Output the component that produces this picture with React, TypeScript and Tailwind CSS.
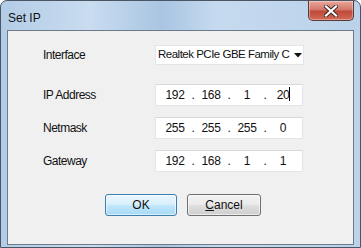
import React from 'react'

const body = { fontFamily: '"Liberation Sans", Arial, sans-serif' }

function IpBox({ parts, caret }: { parts: string[]; caret?: boolean }) {
  return (
    <div className="flex h-[22px] w-[148px] items-center border border-[#e2e5ea] border-t-[#d5d9de] bg-white pl-[3px] text-[12px] tracking-[-0.4px] text-[#111]">
      {parts.map((p, i) => (
        <React.Fragment key={i}>
          <div className="relative w-[32px] text-center">
            {p}
            {caret && i === 3 && <span className="absolute left-[22px] top-[1px] h-[14px] w-px bg-black" />}
          </div>
          {i < 3 && <div className="w-[4px] text-center">.</div>}
        </React.Fragment>
      ))}
    </div>
  )
}

function Row({ label, children, className = '' }: { label: string; children: React.ReactNode; className?: string }) {
  return (
    <div className={`flex items-center ${className}`}>
      <div className="w-[112px] text-[12px] tracking-[-0.5px] text-[#111]">{label}</div>
      {children}
    </div>
  )
}

export default function App() {
  return (
    <div
      className="relative h-[248px] w-[361px] overflow-hidden rounded-t-[7px] border border-[#4a5663] bg-[linear-gradient(90deg,#b3cce6_0%,#c9dcf0_25%,#a9c5e2_45%,#c6daef_60%,#bad2ea_100%)]"
      style={body}
    >
      <div className="flex h-[29px] items-start justify-between">
        <div className="pl-[7px] pt-[8px] text-[12px] text-[#111]">Set IP</div>
        <div className="mr-[6px] flex h-[20px] w-[46px] items-center justify-center rounded-b-[5px] border border-t-0 border-[#5b3a36] bg-[linear-gradient(180deg,#e9a99b_0%,#d2776a_45%,#c04a3a_55%,#d06a58_100%)] shadow-[inset_0_0_0_1px_rgba(255,255,255,0.35)]">
          <svg width="14" height="12" viewBox="0 0 14 12">
            <path d="M2 1.5 L12 10.5 M12 1.5 L2 10.5" stroke="#3a2a28" strokeWidth="4" strokeLinecap="square" />
            <path d="M2 1.5 L12 10.5 M12 1.5 L2 10.5" stroke="#ffffff" strokeWidth="2.2" strokeLinecap="square" />
          </svg>
        </div>
      </div>
      <div className="mx-[6px] h-[215px] border border-[#6c7a8a] bg-[#f0f0f0] pl-[35px] pt-[14px]">
        <Row label="Interface">
          <div className="flex h-[20px] w-[149px] items-center border border-[#e2e5ea] bg-white pl-[2px] text-[11.5px] tracking-[-0.5px] text-[#111]">
            <span className="w-[134px] whitespace-nowrap">Realtek PCIe GBE Family C</span>
            <svg width="8" height="5" viewBox="0 0 8 5" className="ml-[2px] shrink-0">
              <path d="M0 0 H8 L4 4.5 Z" fill="#111" />
            </svg>
          </div>
        </Row>
        <Row label="IP Address" className="mt-[19px]">
          <IpBox parts={['192', '168', '1', '20']} caret />
        </Row>
        <Row label="Netmask" className="mt-[11px]">
          <IpBox parts={['255', '255', '255', '0']} />
        </Row>
        <Row label="Gateway" className="mt-[11px]">
          <IpBox parts={['192', '168', '1', '1']} />
        </Row>
        <div className="mt-[22px] flex gap-[10px] pl-[62px] text-[12px] text-[#111]">
          <button className="flex h-[22px] w-[72px] items-center justify-center rounded-[3px] border border-[#3c7fb1] bg-[linear-gradient(180deg,#eaf6fd_0%,#d9f0fc_45%,#bee6fd_55%,#a7d9f5_100%)] shadow-[inset_0_0_0_1px_rgba(255,255,255,0.6)]">
            OK
          </button>
          <button className="flex h-[22px] w-[74px] items-center justify-center rounded-[3px] border border-[#707070] bg-[linear-gradient(180deg,#f2f2f2_0%,#ebebeb_45%,#dddddd_55%,#cfcfcf_100%)] shadow-[inset_0_0_0_1px_rgba(255,255,255,0.6)]">
            <span><span className="underline">C</span>ancel</span>
          </button>
        </div>
      </div>
    </div>
  )
}
